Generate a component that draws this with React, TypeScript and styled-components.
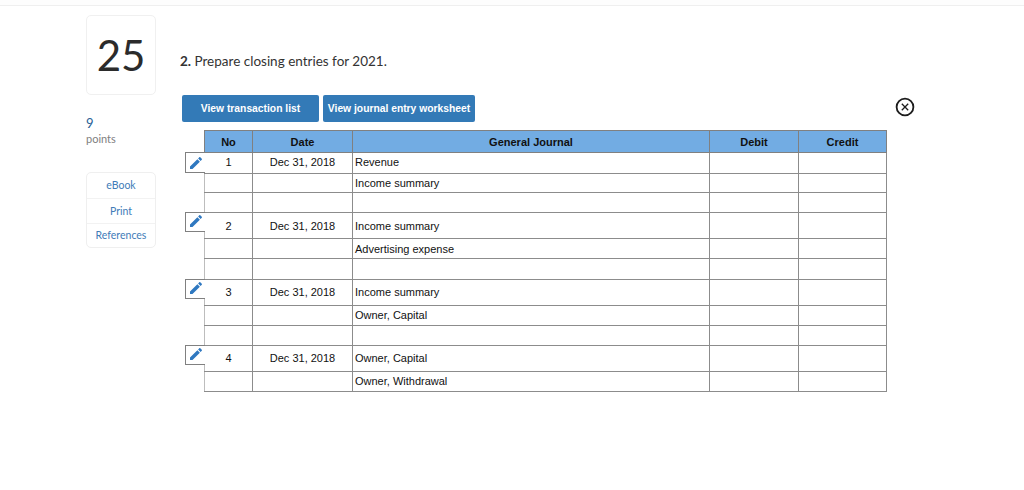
import React from "react";
import styled, { createGlobalStyle } from "styled-components";

const GlobalStyle = createGlobalStyle`
  html, body {
    margin: 0;
    padding: 0;
    background: #fff;
    font-family: "Lato", "Liberation Sans", sans-serif;
  }
`;

const rows = [
  { no: "1", date: "Dec 31, 2018", text: "Revenue", height: 21, edit: 21, pad: 2, lift: true },
  { text: "Income summary", height: 19 },
  { height: 20 },
  { no: "2", date: "Dec 31, 2018", text: "Income summary", height: 26, edit: 20, pad: 0 },
  { text: "Advertising expense", height: 20 },
  { height: 21 },
  { no: "3", date: "Dec 31, 2018", text: "Income summary", height: 26, edit: 20, pad: 0, lift: true },
  { text: "Owner, Capital", height: 20, lift: true },
  { height: 20 },
  { no: "4", date: "Dec 31, 2018", text: "Owner, Capital", height: 26, edit: 20, pad: 0, lift: true },
  { text: "Owner, Withdrawal", height: 20, lift: true },
];

export default function App() {
  return (
    <Page>
      <GlobalStyle />
      <TopRule />
      <Main>
        <Sidebar>
          <NumberBox>25</NumberBox>
          <Points>
            <PointsValue>9</PointsValue>
            <PointsLabel>points</PointsLabel>
          </Points>
          <LinkBox>
            <LinkRow $h={25} $lift>eBook</LinkRow>
            <LinkRow $h={25}>Print</LinkRow>
            <LinkRow $h={24} $lift>References</LinkRow>
          </LinkBox>
        </Sidebar>
        <Content>
          <Prompt>
            <b>2.</b> Prepare closing entries for 2021.
          </Prompt>
          <Toolbar>
            <ActionButton $w={137}>View transaction list</ActionButton>
            <ActionButton $w={152}>View journal entry worksheet</ActionButton>
            <CloseButton>
              <svg width="20" height="20" viewBox="0 0 20 20" fill="none" stroke="#1c1c1c">
                <circle cx="10" cy="10" r="8.4" strokeWidth="1.8" />
                <path d="M6.8 6.8l6.4 6.4M13.2 6.8l-6.4 6.4" strokeWidth="1.3" />
              </svg>
            </CloseButton>
          </Toolbar>
          <Journal>
            <colgroup>
              <col width={48} />
              <col width={100} />
              <col width={357} />
              <col width={89} />
              <col width={88} />
            </colgroup>
            <thead>
              <tr>
                <HeadCell>No</HeadCell>
                <HeadCell>Date</HeadCell>
                <HeadCell>General Journal</HeadCell>
                <HeadCell>Debit</HeadCell>
                <HeadCell>Credit</HeadCell>
              </tr>
            </thead>
            <tbody>
              {rows.map((r, i) => (
                <Row key={i} $h={r.height} $lift={r.lift}>
                  <CenterCell $soft>
                    {r.edit && (
                      <EditButton $h={r.edit} $pad={r.pad}>
                        <svg width="16" height="16" viewBox="0 0 24 24" fill="#2f78c0">
                          <path d="M3 17.25V21h3.75L17.81 9.94l-3.75-3.75L3 17.25zM20.71 7.04c.39-.39.39-1.02 0-1.41l-2.34-2.34c-.39-.39-1.02-.39-1.41 0l-1.83 1.83 3.75 3.75 1.83-1.83z" />
                        </svg>
                      </EditButton>
                    )}
                    {r.no}
                  </CenterCell>
                  <CenterCell>{r.date}</CenterCell>
                  <TextCell>{r.text}</TextCell>
                  <BlankCell $soft />
                  <BlankCell />
                </Row>
              ))}
            </tbody>
          </Journal>
        </Content>
      </Main>
    </Page>
  );
}

const Page = styled.div`
  width: 1024px;
  height: 490px;
  overflow: hidden;
`;

const TopRule = styled.div`
  height: 5px;
  background: #fdfdfd;
  border-bottom: 1px solid #efefef;
`;

const Main = styled.div`
  display: flex;
  padding: 9px 0 0 86px;
`;

const Sidebar = styled.aside`
  width: 70px;
  display: flex;
  flex-direction: column;
`;

const NumberBox = styled.div`
  box-sizing: border-box;
  height: 80px;
  display: flex;
  align-items: center;
  justify-content: center;
  border: 1px solid #f0f0f0;
  border-radius: 5px;
  font-size: 42px;
  color: #2b2b2b;
`;

const Points = styled.div`
  margin-top: 21px;
  display: flex;
  flex-direction: column;
`;

const PointsValue = styled.div`
  font-size: 13px;
  line-height: 15px;
  color: #2a5f96;
`;

const PointsLabel = styled.div`
  font-size: 11px;
  line-height: 15px;
  color: #808080;
`;

const LinkBox = styled.div`
  box-sizing: border-box;
  margin-top: 26px;
  border: 1px solid #efefef;
  border-radius: 5px;
  display: flex;
  flex-direction: column;
`;

const LinkRow = styled.div<{ $h: number; $lift?: boolean }>`
  box-sizing: border-box;
  height: ${(p) => p.$h}px;
  padding-bottom: ${(p) => (p.$lift ? 2 : 0)}px;
  display: flex;
  align-items: center;
  justify-content: center;
  font-size: 10.5px;
  color: #3f7cb8;
  & + & {
    border-top: 1px solid #f2f2f2;
  }
`;

const Content = styled.main`
  margin-left: 24px;
  width: 735px;
  display: flex;
  flex-direction: column;
`;

const Prompt = styled.p`
  margin: 36px 0 0;
  height: 20px;
  line-height: 20px;
  font-size: 13.5px;
  color: #333;
  b {
    font-weight: 700;
  }
`;

const Toolbar = styled.div`
  margin: 24px 0 8px 2px;
  display: flex;
  align-items: center;
  gap: 4px;
`;

const ActionButton = styled.button<{ $w: number }>`
  box-sizing: border-box;
  width: ${(p) => p.$w}px;
  height: 27px;
  padding: 0;
  border: none;
  border-radius: 2px;
  background: #337ab7;
  color: #fff;
  font-family: "Liberation Sans", sans-serif;
  font-size: 10.3px;
  font-weight: 700;
`;

const CloseButton = styled.div`
  margin-left: auto;
  margin-top: 2px;
  align-self: flex-start;
  width: 20px;
  height: 20px;
  display: flex;
`;

const Journal = styled.table`
  width: 683px;
  margin-left: 24px;
  table-layout: fixed;
  border-collapse: collapse;
  font-family: "Liberation Sans", sans-serif;
  font-size: 11px;
  color: #111;
`;

const HeadCell = styled.th`
  height: 21px;
  padding: 0;
  background: #72ace3;
  border: 1px solid #808080;
  font-size: 11px;
  font-weight: 700;
  text-align: center;
`;

const BlankCell = styled.td<{ $soft?: boolean }>`
  padding: 0;
  border: 1px solid #8c8c8c;
  border-left-color: ${(p) => (p.$soft ? "#bdbdbd" : "#a8a8a8")};
`;

const CenterCell = styled(BlankCell)`
  position: relative;
  text-align: center;
`;

const TextCell = styled(BlankCell)`
  padding-left: 2px;
  border-left-color: #8c8c8c;
`;

const Row = styled.tr<{ $h: number; $lift?: boolean }>`
  height: ${(p) => p.$h}px;
  td {
    padding-bottom: ${(p) => (p.$lift ? 2 : 0)}px;
  }
`;

const EditButton = styled.span<{ $h: number; $pad?: number }>`
  position: absolute;
  left: -20px;
  top: -1px;
  box-sizing: border-box;
  width: 20px;
  height: ${(p) => p.$h}px;
  display: flex;
  justify-content: center;
  padding-top: ${(p) => p.$pad ?? 0}px;
  background: #fff;
  border: 1px solid #808080;
  border-right: none;
`;
